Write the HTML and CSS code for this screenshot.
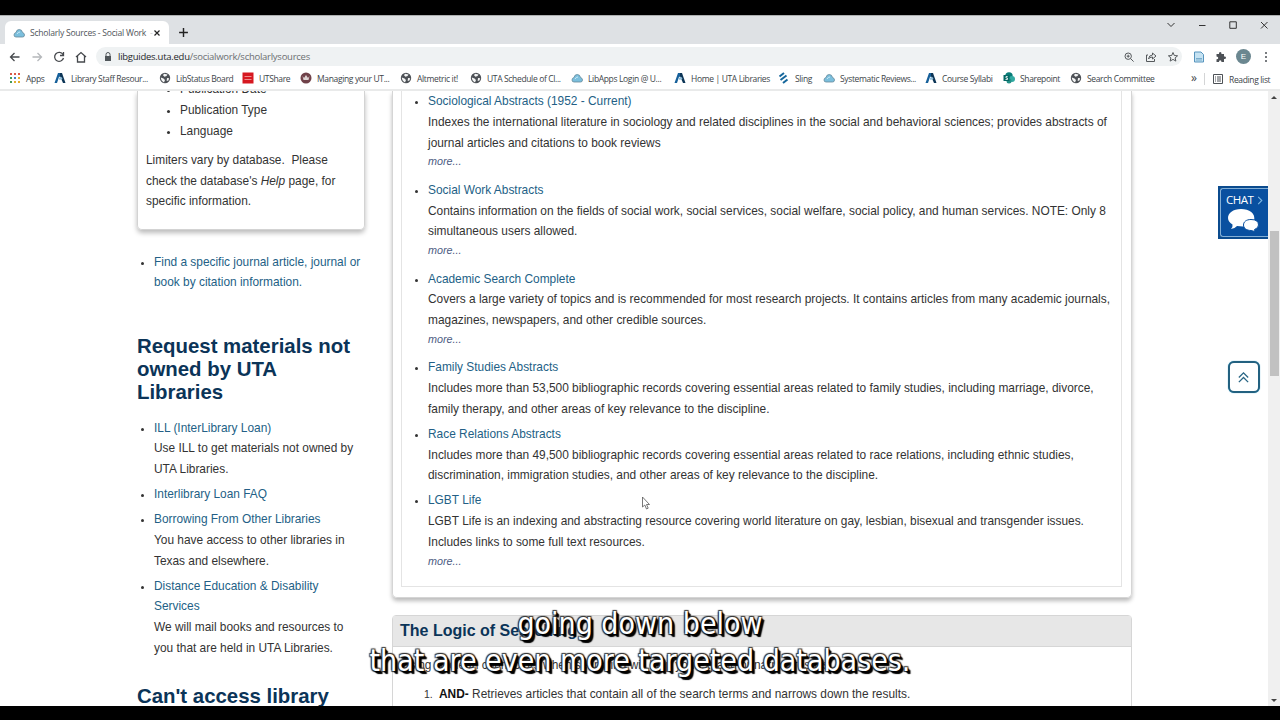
FILE: index.html
```html
<!DOCTYPE html>
<html lang="en"><head><meta charset="utf-8"><title>Scholarly Sources - Social Work</title><link rel="stylesheet" href="styles.css"></head>
<body>
<svg width="0" height="0" class="defs">
<symbol id="globe" viewBox="0 0 12 12"><circle cx="6" cy="6" r="5.2" fill="#4d5156"/><path d="M1.800 5.500l2.700 1 1.500 1.500-1 2.400Q2 9 1.800 5.500M5 1.800l3.500.6L7.500 4 5.500 4.800 4 3.200zM8 6l2.200.2-.8 2.300-1.700.4z" fill="#f4f5f5"/></symbol>
<symbol id="uta" viewBox="0 0 12 12"><path d="M.5 11L4 1h3l1 3-3 1-2 6z" fill="#17609a"/><path d="M6 1h2l3.500 10H9L6 4z" fill="#0c3556"/><path d="M4.500 6l3-1 1 2-3 1z" fill="#8bbbd8"/></symbol>
<symbol id="cloud" viewBox="0 0 12 12"><path d="M3 10Q1 10 1 8q0-2 2-2.500Q3.500 2.500 6.200 2.500 9 2.500 9.500 5.500q2 .5 2 2.500 0 2-2 2z" fill="#7bbfdd" stroke="#65899b" stroke-width=".8"/><path d="M4 7q1-2 3-2" stroke="#c9e9f6" fill="none"/></symbol>
</svg>
<header class="tabs">
<div class="tab"><svg class="i12"><use href="#cloud"/></svg><span class="tabname">Scholarly Sources - Social Work <i>-</i></span><svg class="close" viewBox="0 0 8 8"><path d="M1.500 1.500l5 5M6.500 1.500l-5 5"/></svg></div>
<svg class="plus" viewBox="0 0 10 10"><path d="M5 1v8M1 5h8"/></svg>
<div class="win"><svg viewBox="0 0 10 10"><path d="M1.500 3L5 6.500 8.500 3"/></svg><svg viewBox="0 0 10 10"><path d="M2 5.500h6.500"/></svg><svg viewBox="0 0 10 10"><path d="M1.800 1.800h6.500v6.500H1.800z"/></svg><svg viewBox="0 0 10 10"><path d="M2 2l6.500 6.500M8.500 2L2 8.500"/></svg></div>
</header>
<div class="toolbar">
<svg class="nav" viewBox="0 0 12 12"><path d="M10.500 6H1.500M5.500 2L1.500 6l4 4"/></svg>
<svg class="nav dim" viewBox="0 0 12 12"><path d="M1.500 6h9M6.500 2l4 4-4 4"/></svg>
<svg class="nav" viewBox="0 0 12 12"><path d="M10 3.500A4.500 4.500 0 1 0 10.500 7M10.500 1v3.500H7"/></svg>
<svg class="nav" viewBox="0 0 12 12"><path d="M1 6l5-4.500L11 6M2.500 5v6h7V5"/></svg>
<div class="address"><svg class="lock" viewBox="0 0 8 10"><path d="M2 4V2.500a2 2 0 0 1 4 0V4" fill="none" stroke="#50565a"/><path d="M1 4h6v5H1z" fill="#50565a"/></svg><span class="url"><b>libguides.uta.edu</b>/socialwork/scholarlysources</span>
<svg class="ai" viewBox="0 0 12 12"><circle cx="5.200" cy="5.200" r="3.200"/><path d="M7.600 7.600l3 3M3.700 5.200h3M5.200 3.700v3"/></svg>
<svg class="ai" viewBox="0 0 12 12"><path d="M3 4H1.500v6.500h8V8M3.500 8q.5-4 4-4V2L11 5 7.500 8V6q-3 0-4 2"/></svg>
<svg class="ai" viewBox="0 0 12 12"><path d="M6 1.500l1.300 3 3.300.3-2.500 2.100.8 3.200L6 8.400l-2.900 1.700.8-3.200-2.500-2.100 3.300-.3z"/></svg></div>
<div class="ext"><svg viewBox="0 0 12 12"><path d="M1.500 1h6.500l2.500 2.500V11h-9z" fill="#c5e2f2" stroke="#5794bd"/><path d="M3 7.500h6M3 9h6" stroke="#78adcc"/></svg>
<svg viewBox="0 0 12 12"><path d="M1.500 3H4q-.3-2 1.200-2t1.300 2H9v2.500q2-.3 2 1.200T9 8v3H6.500q0-1.800-1.300-1.800T4 11H1.500V8.200q1.800 0 1.800-1.300T1.500 5.500z" fill="#4d5156"/></svg>
<span class="avatar">E</span><svg viewBox="0 0 12 12"><g fill="#4d5156"><circle cx="6" cy="2" r="1"/><circle cx="6" cy="6" r="1"/><circle cx="6" cy="10" r="1"/></g></svg></div>
</div>
<nav class="bookmarks">
<a class="b1"><svg class="i12" viewBox="0 0 12 12"><g fill="#db5948"><path d="M1 1h2v2H1zM9 1h2v2H9zM5 1h2v2H5z"/></g><path d="M1 5h2v2H1zM1 9h2v2H1z" fill="#459b58"/><path d="M5 5h2v2H5z" fill="#477fc5"/><path d="M9 5h2v2H9zM5 9h2v2H5zM9 9h2v2H9z" fill="#e3ad2e"/></svg><span>Apps</span></a>
<a class="b2"><svg class="i12"><use href="#uta"/></svg><span>Library Staff Resour...</span></a>
<a class="b3"><svg class="i12"><use href="#globe"/></svg><span>LibStatus Board</span></a>
<a class="b4"><svg class="i12" viewBox="0 0 12 12"><path d="M.5.5h11v11H.5z" fill="#d61820"/><path d="M2.500 4.500h7M2.500 7.500h7" stroke="#ef8c8c"/></svg><span>UTShare</span></a>
<a class="b5"><svg class="i12" viewBox="0 0 12 12"><circle cx="6" cy="6" r="5.500" fill="#704249"/><path d="M2.500 4l1.500 2 2-3 2 3 1.500-2-1 4h-5z" fill="#ddd3d2"/></svg><span>Managing your UT...</span></a>
<a class="b6"><svg class="i12"><use href="#globe"/></svg><span>Altmetric it!</span></a>
<a class="b7"><svg class="i12"><use href="#globe"/></svg><span>UTA Schedule of Cl...</span></a>
<a class="b8"><svg class="i12"><use href="#cloud"/></svg><span>LibApps Login @ U...</span></a>
<a class="b9"><svg class="i12"><use href="#uta"/></svg><span>Home | UTA Libraries</span></a>
<a class="b10"><svg class="i12" viewBox="0 0 12 12"><path d="M1.500 4.500l4.500-3.500M2.500 8l6-4.500M5 11l4.500-3.500" stroke="#16679c" stroke-width="2"/></svg><span>Sling</span></a>
<a class="b11"><svg class="i12"><use href="#cloud"/></svg><span>Systematic Reviews...</span></a>
<a class="b12"><svg class="i12"><use href="#uta"/></svg><span>Course Syllabi</span></a>
<a class="b13"><svg class="i12" viewBox="0 0 12 12"><circle cx="6" cy="4" r="3.700" fill="#087c78"/><circle cx="9" cy="7" r="3" fill="#32aaa2"/><circle cx="6" cy="9" r="2.500" fill="#249087"/><path d="M.5 3h6v6h-6z" fill="#046865"/><path d="M4.700 4.500H3V6h1.500v1.500H2.500" stroke="#fff" stroke-width=".8" fill="none"/></svg><span>Sharepoint</span></a>
<a class="b14"><svg class="i12"><use href="#globe"/></svg><span>Search Committee</span></a>
<span class="more">»</span><a class="b15"><svg class="i12" viewBox="0 0 12 12"><path d="M1.500 1.500h9v9h-9zM3 4h1M5 4h4M3 6h1M5 6h4M3 8h1M5 8h4" fill="none" stroke="#4d5156"/></svg><span>Reading list</span></a>
</nav>
<main class="page">
<aside>
<div class="filter"><ul><li>Publication Date</li><li>Publication Type</li><li>Language</li></ul><p>Limiters vary by database.&nbsp; Please<br>check the database's <em>Help</em> page, for<br>specific information.</p></div>
<ul class="side find"><li><a>Find a specific journal article, journal or<br>book by citation information.</a></li></ul>
<h2>Request materials not<br>owned by UTA<br>Libraries</h2>
<ul class="side"><li><a>ILL (InterLibrary Loan)</a><br>Use ILL to get materials not owned by<br>UTA Libraries.</li><li><a>Interlibrary Loan FAQ</a></li><li><a>Borrowing From Other Libraries</a><br>You have access to other libraries in<br>Texas and elsewhere.</li><li><a>Distance Education &amp; Disability<br>Services</a><br>We will mail books and resources to<br>you that are held in UTA Libraries.</li></ul>
<h2 class="access">Can't access library</h2>
</aside>
<section class="content">
<div class="box"><div class="inner"><ul class="dbs">
<li><a>Sociological Abstracts (1952 - Current)</a><br>Indexes the international literature in sociology and related disciplines in the social and behavioral sciences; provides abstracts of<br>journal articles and citations to book reviews<em>more...</em></li>
<li><a>Social Work Abstracts</a><br>Contains information on the fields of social work, social services, social welfare, social policy, and human services. NOTE: Only 8<br>simultaneous users allowed.<em>more...</em></li>
<li><a>Academic Search Complete</a><br>Covers a large variety of topics and is recommended for most research projects. It contains articles from many academic journals,<br>magazines, newspapers, and other credible sources.<em>more...</em></li>
<li><a>Family Studies Abstracts</a><br>Includes more than 53,500 bibliographic records covering essential areas related to family studies, including marriage, divorce,<br>family therapy, and other areas of key relevance to the discipline.</li>
<li><a>Race Relations Abstracts</a><br>Includes more than 49,500 bibliographic records covering essential areas related to race relations, including ethnic studies,<br>discrimination, immigration studies, and other areas of key relevance to the discipline.</li>
<li><a>LGBT Life</a><br>LGBT Life is an indexing and abstracting resource covering world literature on gay, lesbian, bisexual and transgender issues.<br>Includes links to some full text resources.<em>more...</em></li>
</ul></div></div>
<div class="logic"><h3>The Logic of Searching</h3><p>Using Boolean connectors when searching will help you expand or narrow results.</p><div class="and"><span>1.</span><b>AND-</b>&nbsp;Retrieves articles that contain all of the search terms and narrows down the results.</div></div>
</section>
<div class="scroll"><i class="up"></i><i class="thumb"></i><i class="down"></i></div>
</main>
<div class="chat"><div class="chatin"><span>CHAT</span><svg class="chev" viewBox="0 0 6 10"><path d="M1 1l4 4-4 4"/></svg><svg class="bub" viewBox="0 0 32 24"><path d="M14 1C6 1 1 5 1 10c0 3 2 5 4.500 6.500Q6 19 4 21q4-.5 6-3 14 2 17-5C29 5 22 1 14 1z" fill="#fff"/><path d="M24 11.500c-5 0-7.500 2.500-7.500 5.500s3 5.500 7.500 5.500l4 1-.5-2q4-1.500 4-4.500 0-5.500-7.500-5.500z" fill="#fff" stroke="#0950a0"/></svg></div></div>
<div class="top"><svg viewBox="0 0 14 14"><path d="M2 7l5-5 5 5M2 12l5-5 5 5"/></svg></div>
<svg class="cursor" viewBox="0 0 10 15"><path d="M1.500 1v10l2.300-2 1.700 4 1.700-.8-1.700-3.700H8.500z" fill="#fff" stroke="#555" stroke-width=".8"/></svg>
<div class="caption"><span class="c1">going down below</span><span class="c2">that are even more targeted databases.</span></div>
</body></html>
```
FILE: styles.css
```css
*{box-sizing:border-box}
body{margin:0;width:1280px;height:720px;overflow:hidden;background:#fff;border-top:15px solid #000;border-bottom:14px solid #000;font-family:"Liberation Sans",Arial,sans-serif;position:relative;display:flex;flex-direction:column;color:#333}
.defs{position:absolute}
svg{display:block;flex:none;fill:none}
.i12{width:12px;height:12px}
.tabs{height:29px;flex:none;background:#dee1e4;border-top:1px solid #adafb0;display:flex;padding:5px 0 0 5px;font:8.600px "Open Sans",sans-serif;letter-spacing:-.25px;color:#50555a}
.tab{width:164px;height:23px;background:#fff;border-radius:6px 6px 0 0;display:flex;align-items:center;padding-left:8px}
.tabname{width:118px;margin-left:5px;white-space:nowrap}.tabname i{opacity:.3;font-style:normal;margin-left:2px}
.close{width:8px;height:8px;margin-left:5px;stroke:#222;stroke-width:1.200}
.plus{width:11px;height:11px;margin:6px 0 0 9px;stroke:#222;stroke-width:1.300}
.win{display:flex;gap:21px;margin:-1px 11px 0 auto}.win svg{width:10px;height:10px;stroke:#333}
.toolbar{height:25px;flex:none;display:flex;align-items:center;padding-left:9px}
.nav{width:12px;height:12px;margin-right:10px;stroke:#46494d;stroke-width:1.300}.dim{stroke:#b5b8bb}
.address{height:19px;width:1086px;margin-left:-1px;border-radius:10px;background:#eff2f3;display:flex;align-items:center;padding:0 3px 0 7px}
.lock{width:8px;height:10px;margin:0 7px 0 1px}.url{font:9.500px "Open Sans",sans-serif;letter-spacing:-.26px;color:#6b6e71;margin-right:auto;margin-left:-1px}.url b{font-weight:400;color:#25282a}
.ai{width:12px;height:12px;margin-left:10px;stroke:#55595c}
.ext{display:flex;align-items:center;gap:10px;margin-left:11px}.ext>svg{width:12px;height:12px}.avatar{width:15px;height:15px;border-radius:50%;background:#6b8790;color:#fff;font-size:8px;line-height:15px;text-align:center;margin:0 -1px}
.bookmarks{height:22px;flex:none;border-bottom:2px solid #e9eaea;display:flex;padding:0 0 2px 9px;font:8.500px "Open Sans",sans-serif;letter-spacing:-.35px;color:#40454a}
.bookmarks a{display:flex;flex:none;align-items:center;gap:5px;white-space:nowrap;color:#40454a}
.bookmarks .b1{width:45px}.b2{width:105px}.b3{width:83px}.b4{width:58px}.b5{width:100px}.b6{width:70px}.b7{width:101px}.b8{width:103px}.b9{width:104px}.b10{width:45px}.b11{width:102px}.b12{width:78px}.b13{width:67px}.b14{width:121px}.more{width:13px;font-size:12px;line-height:18px}
.b15{border-left:1px solid #d4d5d6;height:12px;margin-top:4px;padding-left:7px}
.page{display:flex;height:615px;overflow:hidden;font-size:11.900px;line-height:20.750px;padding-left:137px;position:relative}
aside{width:228px;flex:none}
ul{margin:0;padding:0;white-space:nowrap}
a{color:#235f86}p{margin:0}
.filter{height:139px;border:1px solid #d3d3d3;border-top:0;border-radius:0 0 5px 5px;box-shadow:0 3px 5px #bbb;padding:0 8px;overflow:hidden}
.filter ul{margin:-12px 0 8.700px;padding-left:34px}
li::marker{font-size:10.500px}
.side{padding-left:17px}.side li,.dbs li{margin-bottom:4.300px}
.find{margin-top:21.500px}
h2{font-size:20.400px;line-height:23px;color:#0b3458;margin:42px 0 13.500px;white-space:nowrap}.access{margin:26px 0 0}
.content{width:740px;margin-left:27px;flex:none}
.box{height:507px;border:1px solid #d5d5d5;border-top:0;border-radius:0 0 5px 5px;box-shadow:0 3px 4px #bbb;padding:0 9px 10px 8px}
.inner{height:100%;border:1px solid #e4e4e4;border-top:0}
.dbs{padding-left:26px}
.dbs em{display:block;font-size:10.800px;line-height:17px;margin-bottom:9.500px;color:#4d5c83}
.logic{height:120px;border:1px solid #d6d6d6;margin-top:17px;border-radius:4px 4px 0 0;white-space:nowrap}
h3{margin:0;background:#e7e7e7;border-bottom:1px solid #d6d6d6;height:31px;line-height:30px;font-size:16px;color:#0b3458;padding-left:7px}
.logic p{padding:8px 0 0 8px}
.and{padding:8px 0 0 31px;display:flex}.and span{font-size:10.500px;width:15px}.and b{color:#111}
.scroll{position:absolute;right:0;top:0;bottom:0;width:12px;background:#f0f0f0}
.thumb{position:absolute;top:140px;left:2px;width:9px;height:145px;background:#c1c1c1}
.up,.down{position:absolute;left:3px;border:3px solid transparent}.up{top:2px;border-bottom-color:#444}.down{bottom:1px;border-top-color:#444}
.chat{position:absolute;left:1218px;top:171px;width:50px;height:53px;background:#0b4b8e;padding:2px 0 2px 2px}
.chatin{height:49px;border:1px solid #83afd6;border-right:0;border-radius:3px 0 0 3px;background:#0950a0;padding:4px 0 0 5px;color:#fff;font:11.500px/14px "Open Sans",sans-serif;letter-spacing:-.5px;display:flex;flex-wrap:wrap;align-content:flex-start}
.chatin span{width:31px}.chev{width:6px;height:9px;margin-top:3px;stroke:#7fb8e2;stroke-width:1.200}.bub{width:32px;height:24px;margin:1px 0 0 1px}
.top{position:absolute;left:1228px;top:346px;width:32px;height:32px;border:2px solid #236180;border-radius:6px;background:#fff;display:grid;place-items:center;box-shadow:0 0 1px #249cca}.top svg{width:13px;height:13px;margin-right:1px;stroke:#286584;stroke-width:1.400}
.cursor{position:absolute;left:641px;top:481px;width:10px;height:15px}
.caption{position:absolute;left:0;top:591px;width:1280px;display:flex;flex-direction:column;align-items:center;color:#fff;font:30px/36.500px "DejaVu Sans Condensed","DejaVu Sans",sans-serif;white-space:nowrap;text-shadow:-1px -1px 1px #333,1px 1px 1px #000,2px 2px 1px #000,3px 3px 1px #000,-1px 1px 1px #333,1px -1px 1px #333}
```
